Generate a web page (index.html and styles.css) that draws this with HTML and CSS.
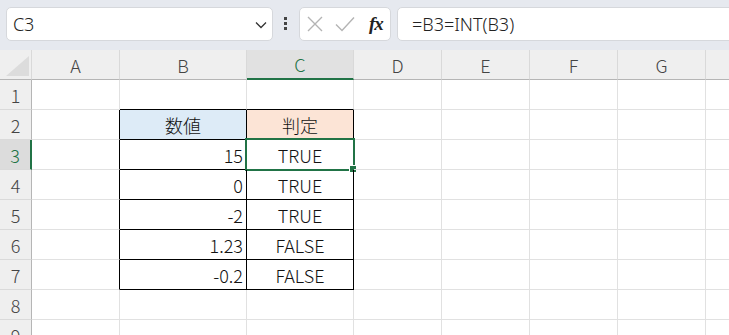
FILE: index.html
```html
<!DOCTYPE html>
<html lang="ja">
<head>
<meta charset="utf-8">
<title>Excel</title>
<link rel="stylesheet" href="styles.css">
</head>
<body>
<div class="app">
  <div class="toolbar">
    <div class="namebox">
      <span class="name">C3</span>
      <svg class="chev" width="12" height="8" viewBox="0 0 12 8"><path d="M1 1.5 L6 6.5 L11 1.5" fill="none" stroke="#333" stroke-width="1.3"/></svg>
    </div>
    <div class="dots"><i></i><i></i><i></i></div>
    <div class="fxbox">
      <svg width="16" height="16" viewBox="0 0 16 16"><path d="M1 1 L15 15 M15 1 L1 15" stroke="#b4b4b4" stroke-width="1.4" fill="none"/></svg>
      <svg width="20" height="16" viewBox="0 0 20 16"><path d="M1 8.5 L7 14.5 L19 1.5" stroke="#b4b4b4" stroke-width="1.4" fill="none"/></svg>
      <span class="fx">fx</span>
    </div>
    <div class="formula">=B3=INT(B3)</div>
  </div>
  <div class="sheet">
    <div class="hd corner"><svg width="23" height="20" viewBox="0 0 23 20"><path d="M0 20 L23 20 L23 0 Z" fill="#dcdcdc"/></svg></div>
    <div class="hd col">A</div>
    <div class="hd col">B</div>
    <div class="hd col sel">C</div>
    <div class="hd col">D</div>
    <div class="hd col">E</div>
    <div class="hd col">F</div>
    <div class="hd col">G</div>
    <div class="hd col"></div>

    <div class="hd row">1</div>
    <div class="c"></div><div class="c tb"></div><div class="c tb"></div><div class="c"></div><div class="c"></div><div class="c"></div><div class="c"></div><div class="c"></div>

    <div class="hd row">2</div>
    <div class="c tr"></div><div class="c t h1">数値</div><div class="c t h2">判定</div><div class="c"></div><div class="c"></div><div class="c"></div><div class="c"></div><div class="c"></div>

    <div class="hd row rsel">3</div>
    <div class="c tr"></div><div class="c t num">15</div><div class="c t ctr active">TRUE<span class="selbox"></span><span class="handle"></span></div><div class="c"></div><div class="c"></div><div class="c"></div><div class="c"></div><div class="c"></div>

    <div class="hd row">4</div>
    <div class="c tr"></div><div class="c t num">0</div><div class="c t ctr">TRUE</div><div class="c"></div><div class="c"></div><div class="c"></div><div class="c"></div><div class="c"></div>

    <div class="hd row">5</div>
    <div class="c tr"></div><div class="c t num">-2</div><div class="c t ctr">TRUE</div><div class="c"></div><div class="c"></div><div class="c"></div><div class="c"></div><div class="c"></div>

    <div class="hd row">6</div>
    <div class="c tr"></div><div class="c t num">1.23</div><div class="c t ctr">FALSE</div><div class="c"></div><div class="c"></div><div class="c"></div><div class="c"></div><div class="c"></div>

    <div class="hd row">7</div>
    <div class="c tr"></div><div class="c t num">-0.2</div><div class="c t ctr">FALSE</div><div class="c"></div><div class="c"></div><div class="c"></div><div class="c"></div><div class="c"></div>

    <div class="hd row">8</div>
    <div class="c"></div><div class="c"></div><div class="c"></div><div class="c"></div><div class="c"></div><div class="c"></div><div class="c"></div><div class="c"></div>

    <div class="hd row">9</div>
    <div class="c"></div><div class="c"></div><div class="c"></div><div class="c"></div><div class="c"></div><div class="c"></div><div class="c"></div><div class="c"></div>
  </div>
</div>
</body>
</html>
```

FILE: styles.css
```css
* { box-sizing: border-box; }
html, body { margin: 0; padding: 0; }
body {
  width: 729px;
  height: 335px;
  overflow: hidden;
  background: #fff;
  font-family: "Noto Sans CJK JP", "Noto Sans", sans-serif;
  color: #222;
}
.app { width: 729px; height: 335px; overflow: hidden; }

.toolbar {
  height: 50px;
  background: #e6e9ef;
  display: flex;
  align-items: flex-start;
  padding: 7px 0 0 6px;
}
.namebox {
  width: 267px;
  height: 34px;
  background: #fff;
  border: 1px solid #d6d8dc;
  border-radius: 5px;
  display: flex;
  align-items: center;
  justify-content: space-between;
  padding: 0 5px 0 6px;
}
.name {
  font-family: "Noto Sans", sans-serif;
  font-weight: 300;
  font-size: 18px;
  color: #222;
  letter-spacing: -0.3px;
}
.chev { margin-top: 1px; }
.dots {
  width: 4px;
  margin: 10px 11px 0 11px;
  display: flex;
  flex-direction: column;
  gap: 2px;
}
.dots i {
  display: block;
  width: 3px;
  height: 3px;
  background: #444;
}
.fxbox {
  width: 92px;
  height: 34px;
  background: #fff;
  border: 1px solid #d6d8dc;
  border-radius: 5px;
  display: flex;
  align-items: center;
  padding: 0 0 0 7px;
}
.fxbox svg:first-child { margin-right: 12px; }
.fxbox svg:nth-child(2) { margin-right: 14px; }
.fx {
  font-family: "Liberation Serif", "DejaVu Serif", serif;
  font-style: italic;
  font-weight: bold;
  font-size: 19px;
  color: #222;
  letter-spacing: -1px;
  line-height: 1;
  margin-top: -2px;
}
.formula {
  flex: 1;
  height: 34px;
  margin-left: 6px;
  margin-right: -10px;
  background: #fff;
  border: 1px solid #d6d8dc;
  border-radius: 5px;
  font-family: "Noto Sans", sans-serif;
  font-weight: 300;
  font-size: 18px;
  line-height: 32px;
  padding-left: 14px;
  color: #222;
}

.sheet {
  display: grid;
  grid-template-columns: 32px 88px 127px 107px 88px 88px 88px 88px 88px;
  grid-auto-rows: 30px;
  width: 794px;
}
.c, .hd {
  border-right: 1px solid #e1e1e1;
  border-bottom: 1px solid #e1e1e1;
  position: relative;
  font-size: 18px;
  font-weight: 300;
  display: flex;
  align-items: center;
}
.hd {
  background: #efefef;
  color: #444;
  justify-content: center;
}
.hd.col {
  border-bottom: 1px solid #b5b5b5;
  border-right: 1px solid #d9d9d9;
}
.hd.row {
  border-right: 1px solid #b5b5b5;
  border-bottom: 1px solid #dadada;
}
.corner {
  border-right: 1px solid #d9d9d9;
  border-bottom: 1px solid #b5b5b5;
  align-items: flex-end;
  justify-content: flex-end;
  padding: 0 2px 3px 0;
}
.hd.col.sel {
  background: #e1e1e1;
  color: #217346;
  border-bottom: 2px solid #217346;
}
.hd.rsel {
  background: #dcdcdc;
  color: #217346;
  border-right: 2px solid #217346;
}
.c { color: #111; }
.tb { border-bottom-color: #000; }
.tr { border-right-color: #000; }
.t { border-right-color: #000; border-bottom-color: #000; }
.h1 { background: #ddebf7; justify-content: center; }
.h2 { background: #fce4d6; justify-content: center; }
.num { justify-content: flex-end; padding-right: 3px; }
.ctr { justify-content: center; }
.selbox {
  position: absolute;
  left: -2px;
  top: -2px;
  right: -2px;
  bottom: -2px;
  border: 2px solid #217346;
  pointer-events: none;
}
.handle {
  position: absolute;
  right: -3px;
  bottom: -3px;
  width: 6px;
  height: 6px;
  background: #217346;
  outline: 1px solid #fff;
}
```
